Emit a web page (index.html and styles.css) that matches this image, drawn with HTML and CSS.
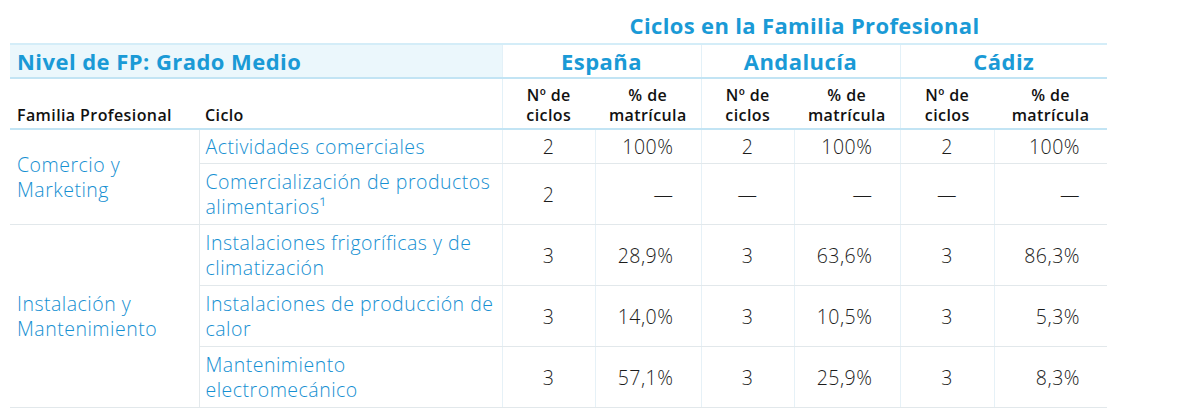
FILE: index.html
```html
<!DOCTYPE html>
<html lang="es">
<head>
<meta charset="utf-8">
<title>Ciclos en la Familia Profesional</title>
<link rel="stylesheet" href="styles.css">
</head>
<body>
<table class="fp">
  <colgroup>
    <col class="c-fam"><col class="c-ciclo">
    <col class="c-n"><col class="c-p">
    <col class="c-n"><col class="c-p">
    <col class="c-n3"><col class="c-p3">
  </colgroup>
  <thead>
    <tr class="r-title">
      <th colspan="2"></th>
      <th colspan="6" class="title">Ciclos en la Familia Profesional</th>
    </tr>
    <tr class="r-band">
      <th colspan="2" class="band">Nivel de FP: Grado Medio</th>
      <th colspan="2" class="region">España</th>
      <th colspan="2" class="region">Andalucía</th>
      <th colspan="2" class="region">Cádiz</th>
    </tr>
    <tr class="r-sub">
      <th class="sub-l">Familia Profesional</th>
      <th class="sub-l sub-ciclo">Ciclo</th>
      <th class="sub-c sep">Nº de<br>ciclos</th>
      <th class="sub-c">% de<br>matrícula</th>
      <th class="sub-c sep">Nº de<br>ciclos</th>
      <th class="sub-c">% de<br>matrícula</th>
      <th class="sub-c sep">Nº de<br>ciclos</th>
      <th class="sub-c">% de<br>matrícula</th>
    </tr>
  </thead>
  <tbody>
    <tr class="r-one">
      <td rowspan="2" class="fam">Comercio y<br>Marketing</td>
      <td class="ciclo">Actividades comerciales</td>
      <td class="n">2</td><td class="p">100%</td>
      <td class="n">2</td><td class="p">100%</td>
      <td class="n">2</td><td class="p">100%</td>
    </tr>
    <tr>
      <td class="ciclo">Comercialización de productos alimentarios¹</td>
      <td class="n">2</td><td class="p">—</td>
      <td class="n">—</td><td class="p">—</td>
      <td class="n">—</td><td class="p">—</td>
    </tr>
    <tr class="grp">
      <td rowspan="3" class="fam">Instalación y<br>Mantenimiento</td>
      <td class="ciclo">Instalaciones frigoríficas y de climatización</td>
      <td class="n">3</td><td class="p">28,9%</td>
      <td class="n">3</td><td class="p">63,6%</td>
      <td class="n">3</td><td class="p">86,3%</td>
    </tr>
    <tr>
      <td class="ciclo">Instalaciones de producción de calor</td>
      <td class="n">3</td><td class="p">14,0%</td>
      <td class="n">3</td><td class="p">10,5%</td>
      <td class="n">3</td><td class="p">5,3%</td>
    </tr>
    <tr>
      <td class="ciclo">Mantenimiento<br>electromecánico</td>
      <td class="n">3</td><td class="p">57,1%</td>
      <td class="n">3</td><td class="p">25,9%</td>
      <td class="n">3</td><td class="p">8,3%</td>
    </tr>
  </tbody>
</table>
</body>
</html>
```

FILE: styles.css
```css
html, body {
  margin: 0;
  padding: 0;
  background: #ffffff;
}
body {
  padding-left: 10px;
  font-family: "Open Sans", "Noto Sans", "Liberation Sans", sans-serif;
}
.fp {
  border-collapse: collapse;
  table-layout: fixed;
  width: 1097px;
}
.c-fam { width: 189px; }
.c-ciclo { width: 303px; }
.c-n { width: 93px; }
.c-p { width: 106px; }
.c-n3 { width: 94px; }
.c-p3 { width: 113px; }

.fp th, .fp td {
  padding: 0;
}

.fp .r-title th {
  height: 40px;
  vertical-align: bottom;
  padding-bottom: 3px;
}
.fp .title {
  color: #1a9ad6;
  font-size: 22px;
  font-weight: 700;
  letter-spacing: 0.35px;
  line-height: 30px;
  text-align: center;
}

.fp .r-band th {
  height: 32px;
  border-top: 2px solid #d4edf8;
  border-bottom: 2px solid #c2e4f4;
  color: #1a9ad6;
  font-size: 22px;
  font-weight: 700;
  letter-spacing: 0.45px;
  line-height: 30px;
}
.fp .band {
  background: #ebf7fc;
  text-align: left;
  padding-left: 7px;
}
.fp .region {
  text-align: center;
  border-left: 1px solid #e3f1f8;
}

.fp .r-sub th {
  height: 46px;
  border-bottom: 2px solid #c2e4f4;
  color: #111111;
  font-size: 16px;
  font-weight: 600;
  letter-spacing: 0.4px;
  line-height: 20px;
  vertical-align: bottom;
  padding-bottom: 3px;
}
.fp .sub-l {
  text-align: left;
  padding-left: 7px;
}
.fp .sub-ciclo {
  padding-left: 6px;
}
.fp .sub-c {
  text-align: center;
}
.fp .sub-c.sep {
  border-left: 1px solid #e3f1f8;
}

.fp td {
  font-size: 19.5px;
  font-weight: 300;
  letter-spacing: 0.5px;
  line-height: 25px;
  color: #1c1c1c;
  border-bottom: 1px solid #e2e8eb;
  border-left: 1px solid #e6f1f7;
  padding-top: 5px;
  padding-bottom: 5px;
}
.fp td.fam {
  color: #1690d2;
  border-left: none;
  padding-left: 7px;
  vertical-align: middle;
}
.fp td.ciclo {
  color: #1690d2;
  padding-left: 6px;
  padding-right: 4px;
  border-left: 1px solid #e3e9ec;
}
.fp td.n {
  text-align: center;
}
.fp td.p {
  text-align: right;
  padding-right: 27px;
}
.fp .r-one td {
  padding-top: 4px;
  padding-bottom: 4px;
}
```
